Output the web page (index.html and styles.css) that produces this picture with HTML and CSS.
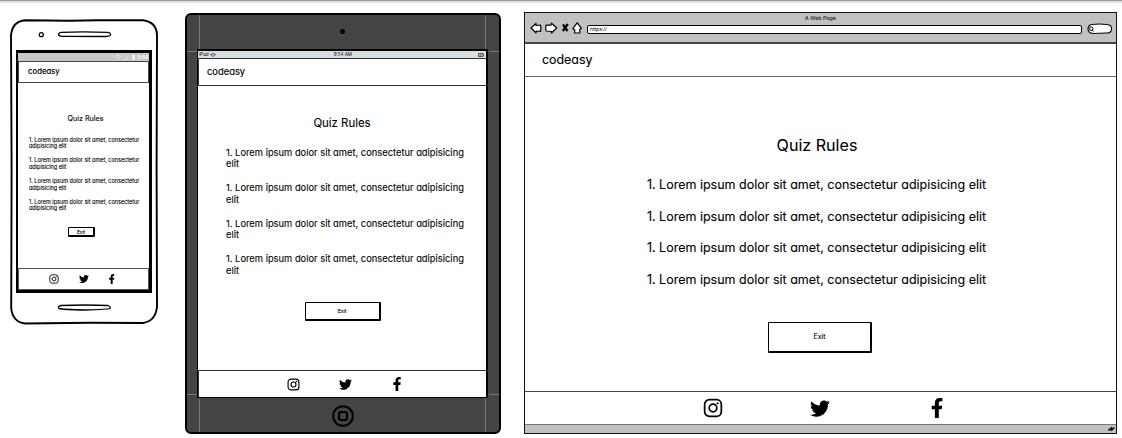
FILE: index.html
```html
<!DOCTYPE html>
<html lang="en">
<head>
<meta charset="utf-8">
<title>Quiz Rules wireframes</title>
<link rel="stylesheet" href="styles.css">
</head>
<body>
<svg class="defs" width="0" height="0">
  <symbol id="instagram" viewBox="0 0 24 24">
    <rect x="2" y="2" width="20" height="20" rx="5.500" fill="none" stroke="#000" stroke-width="2.100"/>
    <circle cx="12" cy="12" r="4.600" fill="none" stroke="#000" stroke-width="2.100"/>
    <circle cx="17.500" cy="6.500" r="1.300"/>
  </symbol>
  <symbol id="twitter" viewBox="0 0 512 416">
    <path d="M459 104c.3 4.500.3 9 .3 13.600 0 138.700-105.600 298.600-298.600 298.600-59.500 0-114.700-17.200-161.100-47.100 8.400 1 16.600 1.300 25.300 1.300 49 0 94.200-16.600 130.300-44.800-46.100-1-84.800-31.200-98.100-72.800 6.500 1 13 1.600 19.800 1.600 9.400 0 18.800-1.300 27.600-3.600-48.100-9.700-84.100-52-84.100-103v-1.300c14 7.800 30.200 12.700 47.400 13.300-28.300-18.800-46.800-51-46.800-87.400 0-19.500 5.200-37.400 14.300-53 51.700 63.700 129.300 105.300 216.400 109.800-1.600-7.800-2.600-15.900-2.600-24C249.100 47.200 296 0 354 0c30.200 0 57.500 12.700 76.700 33.100 23.700-4.500 46.500-13.300 66.600-25.300-7.800 24.400-24.400 44.800-46.100 57.800 21.100-2.300 41.600-8.100 60.400-16.200-14.300 20.800-32.200 39.300-52.600 54.600z"/>
  </symbol>
  <symbol id="facebook" viewBox="18 0 280 512">
    <path d="M279 288l14.200-92.700h-88.900v-60.100c0-25.300 12.400-50.100 52.200-50.100h40.400V6.300S260.400 0 225.400 0C152.200 0 104.400 44.400 104.400 124.700v70.600H23V288h81.400v224h99.900V288z"/>
  </symbol>
</svg>

<main class="board">
  <section class="phone">
    <svg class="frame" viewBox="0 0 148 306">
      <path d="M15 1.300 60 1.800 88 1.200 133 1.300Q146.500 3 147 16L146.600 150 147 288Q145.500 302 133 304L80 303.800 15 304.500Q2.500 303 1.200 289L1.600 150 1 16Q2.500 2.500 15 1.300Z" fill="#fff" stroke="#000" stroke-width="1.900"/>
      <circle cx="31.300" cy="15.700" r="2" fill="none" stroke="#000" stroke-width="1.300"/>
      <path d="M51 13.300Q75 12.600 98 13.400 101 14 100.500 16 100 17.300 95 17.500L52 17.300Q48.500 17 48.500 15.200 49 13.500 51 13.300Z" fill="none" stroke="#000" stroke-width="1.300"/>
      <path d="M51 286.500Q75 285.500 98 286.500 101 287.500 100 289.500 98 290.300 75 291 53 290.500 49 289.500 47 287.500 51 286.500Z" fill="none" stroke="#000" stroke-width="1.300"/>
    </svg>
    <div class="screen">
      <div class="status"><svg class="signals" viewBox="0 0 22 7"><path d="M1 2.500Q4 0 7 2.500M2.500 4Q4 2.700 5.500 4M4 5.500v.6M9 6h1V5M11 6V4M13 6V2" fill="none" stroke="#eee" stroke-width=".8"/><path d="M18 1h3v5h-3z" fill="#eee"/></svg><span>9:54</span></div>
      <header class="site">codeasy</header>
      <div class="content">
        <h1>Quiz Rules</h1>
        <div class="rules">
          <p>1. Lorem ipsum dolor sit amet, consectetur adipisicing elit</p>
          <p>1. Lorem ipsum dolor sit amet, consectetur adipisicing elit</p>
          <p>1. Lorem ipsum dolor sit amet, consectetur adipisicing elit</p>
          <p>1. Lorem ipsum dolor sit amet, consectetur adipisicing elit</p>
        </div>
        <button class="exit">Exit</button>
      </div>
      <footer class="social">
        <svg class="ig"><use href="#instagram"/></svg><svg class="tw"><use href="#twitter"/></svg><svg class="fb"><use href="#facebook"/></svg>
      </footer>
    </div>
  </section>

  <section class="tablet">
    <svg class="guides" viewBox="0 0 312 417"><path d="M12.500 0v35M298.500 0v35M0 36.500h10M302 36.500h10M12.500 384v33M298.500 384v33M0 379.500h10M302 379.500h10" stroke="#777" fill="none"/></svg>
    <div class="bezel"><i class="camera"></i></div>
    <div class="screen">
      <div class="status"><span class="carrier">iPad <svg viewBox="0 0 6 4"><path d="M.5 1.500Q3-.5 5.500 1.500L3 3.500Z" fill="none" stroke="#333" stroke-width=".8"/></svg></span><span class="clock">9:54 AM</span><svg class="battery" viewBox="0 0 6 4"><path d="M.5.5h4.500v3H.5zM5.500 1.300v1.400M2 1.300v1.400M3 1.300v1.400" fill="none" stroke="#333" stroke-width=".8"/></svg></div>
      <header class="site">codeasy</header>
      <div class="content">
        <h1>Quiz Rules</h1>
        <div class="rules">
          <p>1. Lorem ipsum dolor sit amet, consectetur adipisicing elit</p>
          <p>1. Lorem ipsum dolor sit amet, consectetur adipisicing elit</p>
          <p>1. Lorem ipsum dolor sit amet, consectetur adipisicing elit</p>
          <p>1. Lorem ipsum dolor sit amet, consectetur adipisicing elit</p>
        </div>
        <button class="exit">Exit</button>
      </div>
      <footer class="social">
        <svg class="ig"><use href="#instagram"/></svg><svg class="tw"><use href="#twitter"/></svg><svg class="fb"><use href="#facebook"/></svg>
      </footer>
    </div>
    <div class="home"><svg viewBox="0 0 22 22"><circle cx="11" cy="11" r="9.800" fill="none" stroke="#000" stroke-width="2"/><rect x="7" y="7" width="8" height="8" rx="2" fill="none" stroke="#000" stroke-width="2.200"/></svg></div>
  </section>

  <section class="browser">
    <div class="chrome">
      <div class="page-title">A Web Page</div>
      <div class="toolbar">
        <svg class="nav" viewBox="0 0 54 14">
          <g fill="#fff" stroke="#000" stroke-width="1.200" stroke-linejoin="round">
            <path d="M1 7 6 2.400V4.500L10.500 4Q11.500 7 10.500 10.500L6.500 10 6 11.800Z"/>
            <path d="M26.800 7 21.500 2.200 21 4.200 16 4Q15.500 7 16 10L21.500 10.500V12Z"/>
            <path d="M47.200 1.800 51.500 7.300 49.800 8.200V11.800L44.500 12 44.800 8.700 42.800 7.700Z"/>
          </g>
          <path d="M33 3.500 37.500 10M37.800 3 32.800 10" stroke="#000" stroke-width="2.200"/>
        </svg>
        <div class="address">https://</div>
        <svg class="search" viewBox="0 0 26 12"><path d="M5 1.500Q12 .5 20 1.500 25 2 24.500 6 24.500 10 20 10L6 10.500Q1 10 1 6 1 2 5 1.500Z" fill="#fff" stroke="#000" stroke-width="1.100"/><circle cx="4.200" cy="5.700" r="1.800" fill="none" stroke="#000"/><path d="M5 7 6.500 8.500" stroke="#000"/></svg>
      </div>
    </div>
    <header class="site">codeasy</header>
    <div class="content">
      <h1>Quiz Rules</h1>
      <div class="rules">
        <p>1. Lorem ipsum dolor sit amet, consectetur adipisicing elit</p>
        <p>1. Lorem ipsum dolor sit amet, consectetur adipisicing elit</p>
        <p>1. Lorem ipsum dolor sit amet, consectetur adipisicing elit</p>
        <p>1. Lorem ipsum dolor sit amet, consectetur adipisicing elit</p>
      </div>
      <button class="exit">Exit</button>
    </div>
    <footer class="social">
      <svg class="ig"><use href="#instagram"/></svg><svg class="tw"><use href="#twitter"/></svg><svg class="fb"><use href="#facebook"/></svg>
    </footer>
    <div class="statusbar"><svg viewBox="0 0 7 6"><path d="M.5 4.500 4 1.300M3 4.700 6.300 1.500" stroke="#000" stroke-width="1.600"/></svg></div>
  </section>
</main>
</body>
</html>
```
FILE: styles.css
```css
* { box-sizing: border-box; }
body {
  margin: 0;
  height: 438px;
  overflow: hidden;
  background: #fff;
  color: #000;
  font-family: Inter, "Liberation Sans", sans-serif;
  font-feature-settings: "cv11";
  border-top: 1px solid #999;
  box-shadow: inset 0 2px #e2e2e2;
}
h1, p { margin: 0; font-weight: 400; }
svg { display: block; flex: none; }
.defs { display: none; }
.board {
  display: flex;
  align-items: flex-start;
  padding: 11px 0 0 10px;
}
.phone, .tablet { position: relative; flex: none; }
.frame, .guides { position: absolute; inset: 0; width: 100%; height: 100%; }
.screen { position: relative; display: flex; flex-direction: column; background: #fff; }
.site { flex: none; display: flex; align-items: center; border: 1px solid #333; -webkit-text-stroke: .15px #000; }
.content { flex: 1; display: flex; flex-direction: column; align-items: center; -webkit-text-stroke: .1px #000; }
.rules { display: flex; flex-direction: column; }
.exit {
  font-family: inherit;
  font-feature-settings: inherit;
  color: #000;
  background: #fff;
  border: 1px solid #000;
  border-radius: 1px;
  padding: 0;
  margin: 0;
}
.social { flex: none; display: flex; align-items: center; border: 1px solid #333; }

/* phone */
.phone { width: 148px; height: 306px; margin-top: 7px; padding: 31px 6px 0 6px; }
.phone .screen { width: 136px; height: 243px; border: 3px solid #000; border-width: 3px 3px 3px 2px; }
.phone .status {
  height: 8px; background: #c8c8c8; display: flex; align-items: center;
  justify-content: flex-end; gap: 2px; padding-right: 1px; color: #fff; font-size: 4.500px; font-weight: 600;
}
.signals { width: 22px; height: 7px; }
.phone .site { height: 22px; padding: 0 0 2px 9px; font-size: 7.800px; border-color: #444; }
.phone h1 { margin-top: 31px; height: 10px; line-height: 10px; font-size: 7.200px; margin-left: 4px; }
.phone .rules { margin-top: 12.500px; width: 114px; margin-left: 5px; gap: 7.600px; font-size: 5.500px; line-height: 6.600px; }
.phone .exit { width: 27px; height: 10px; margin: 15px 0 0 -4px; font-size: 4.800px; line-height: 8px; border-width: 1px 2px 2px 1px; }
.phone .social { height: 22px; padding-left: 30px; border-color: #555; }
.phone .ig { width: 10px; height: 10px; }
.phone .tw { width: 10px; height: 8px; margin-left: 20px; }
.phone .fb { width: 5.500px; height: 10px; margin-left: 20px; }

/* tablet */
.tablet {
  width: 316px; height: 421px; margin: 1px 0 0 27px; padding: 0 10px;
  background: #444; border: 2px solid #000; border-radius: 6px;
}
.bezel { height: 34px; display: flex; justify-content: center; padding: 14px 2px 0 0; }
.camera { width: 5px; height: 5px; border-radius: 50%; background: #000; }
.tablet .screen { width: 291px; height: 349px; border: 2px solid #000; border-width: 2px 2px 1px 1px; }
.tablet .status {
  height: 7px; background: #d5dee1; display: flex; justify-content: space-between;
  align-items: center; padding: 0 2px 0 1px; font-size: 4.500px; line-height: 6px;
}
.carrier { display: flex; align-items: center; gap: 2px; }
.carrier svg, .battery { width: 6px; height: 4px; }
.clock { margin-right: 9px; }
.tablet .site { height: 28px; padding: 0 0 1px 8px; font-size: 9.400px; border-width: 1px 0 1px 1px; }
.tablet h1 { margin-top: 29px; height: 16px; line-height: 16px; font-size: 11.400px; }
.tablet .rules { margin-top: 15.500px; width: 242px; margin-left: 10px; gap: 12px; font-size: 9.350px; line-height: 11.800px; }
.tablet .exit { width: 76px; height: 19px; margin: 25px 0 0 1px; font-size: 5px; line-height: 16px; border-width: 1px 2px 2px 1px; }
.tablet .social { height: 27px; padding-left: 88px; border-width: 1px 0 0 1px; }
.tablet .ig { width: 13px; height: 13px; }
.tablet .tw { width: 13px; height: 11px; margin-left: 39px; }
.tablet .fb { width: 8px; height: 14px; margin-left: 41px; }
.home { display: flex; justify-content: center; padding: 7px 1px 0 0; }
.home svg { width: 22px; height: 22px; }

/* browser */
.browser {
  width: 593px; height: 422px; margin-left: 23px; flex: none;
  display: flex; flex-direction: column; border: 1px solid #111; background: #fff;
}
.chrome { height: 31px; flex: none; background: #c1c1c1; border-bottom: 2px solid #444; }
.page-title { height: 9px; font-size: 5.300px; line-height: 10px; text-align: center; }
.toolbar { display: flex; align-items: center; padding-left: 5px; }
.nav { width: 54px; height: 14px; margin-top: -2px; }
.address {
  width: 495px; height: 9px; margin: 1px 0 0 3px; padding-left: 2px; background: #fff;
  border: 1px solid #000; border-radius: 2px; font-size: 5px; line-height: 7px;
}
.search { width: 26px; height: 12px; margin: 1px 0 0 5px; }
.browser .site { height: 33px; padding: 0 0 2px 17px; font-size: 12.400px; border-width: 0 0 1px; border-color: #666; }
.browser h1 { margin-top: 57px; height: 22px; line-height: 22px; font-size: 16.100px; margin-left: -7px; }
.browser .rules { margin: 19px 0 0 -8px; gap: 11.700px; font-size: 12.500px; line-height: 20px; white-space: nowrap; }
.browser .exit { width: 104px; height: 31px; margin-top: 32px; margin-left: -1px; font-size: 7px; line-height: 26px; border-width: 1px 2px 2px 1px; }
.browser .social { height: 34px; padding-left: 178px; border-width: 1px 0; border-color: #444 #777 #777; }
.browser .ig { width: 20px; height: 20px; }
.browser .tw { width: 20px; height: 17px; margin-left: 87px; }
.browser .fb { width: 12px; height: 20px; margin-left: 101px; }
.statusbar { height: 8px; flex: none; background: #c1c1c1; display: flex; justify-content: flex-end; align-items: center; padding-right: 1px; }
.statusbar svg { width: 7px; height: 6px; }
```
